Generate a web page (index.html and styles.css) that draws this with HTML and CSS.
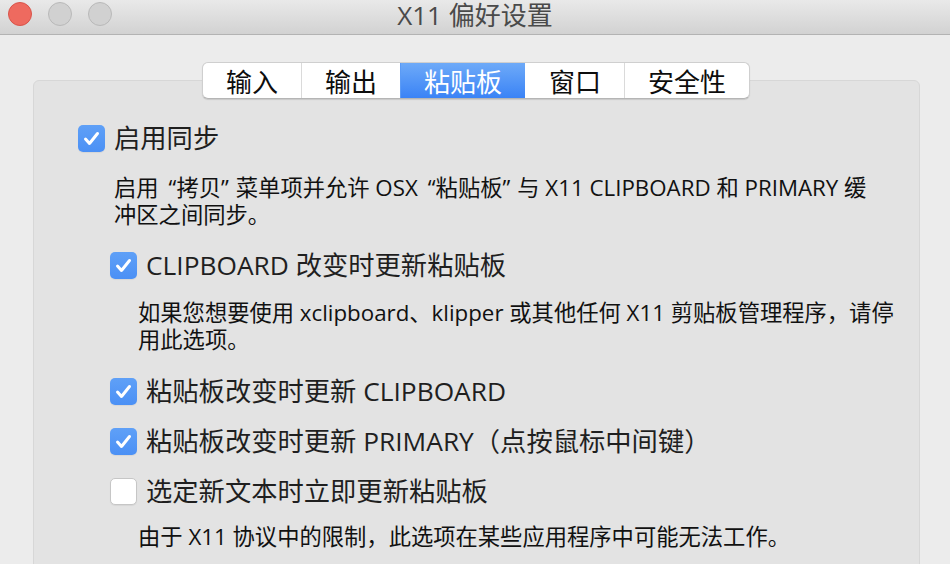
FILE: index.html
```html
<!DOCTYPE html>
<html lang="zh-CN">
<head>
<meta charset="utf-8">
<title>X11 偏好设置</title>
<link rel="stylesheet" href="styles.css">
</head>
<body>
<div class="window">
  <header class="titlebar">
    <div class="lights">
      <span class="light close"></span>
      <span class="light"></span>
      <span class="light"></span>
    </div>
    <div class="title">X11 偏好设置</div>
    <div class="spacer"></div>
  </header>

  <main class="content">
    <nav class="tabs">
      <span class="tab">输入</span>
      <span class="tab">输出</span>
      <span class="tab active">粘贴板</span>
      <span class="tab">窗口</span>
      <span class="tab">安全性</span>
    </nav>

    <section class="panel">
      <div class="option">
        <span class="box checked"><svg viewBox="0 0 27 27"><path d="M7.5 14 L11.5 18.5 L19.5 8.5"/></svg></span>
        <span class="label">启用同步</span>
      </div>
      <p class="desc d1">启用<span class="ql">“</span>拷贝<span class="qr">”</span>菜单项并允许 OSX<span class="ql">“</span>粘贴板<span class="qr">”</span>与 X11 CLIPBOARD 和 PRIMARY 缓<br>冲区之间同步。</p>

      <div class="nested">
        <div class="option">
          <span class="box checked"><svg viewBox="0 0 27 27"><path d="M7.5 14 L11.5 18.5 L19.5 8.5"/></svg></span>
          <span class="label">CLIPBOARD 改变时更新粘贴板</span>
        </div>
        <p class="desc d2">如果您想要使用 xclipboard、klipper 或其他任何 X11 剪贴板管理程序，请停<br>用此选项。</p>

        <div class="option o3">
          <span class="box checked"><svg viewBox="0 0 27 27"><path d="M7.5 14 L11.5 18.5 L19.5 8.5"/></svg></span>
          <span class="label">粘贴板改变时更新 CLIPBOARD</span>
        </div>
        <div class="option o4">
          <span class="box checked"><svg viewBox="0 0 27 27"><path d="M7.5 14 L11.5 18.5 L19.5 8.5"/></svg></span>
          <span class="label">粘贴板改变时更新 PRIMARY（点按鼠标中间键）</span>
        </div>
        <div class="option o4">
          <span class="box"></span>
          <span class="label">选定新文本时立即更新粘贴板</span>
        </div>
        <p class="desc d3">由于 X11 协议中的限制，此选项在某些应用程序中可能无法工作。</p>
      </div>
    </section>
  </main>
</div>
</body>
</html>
```

FILE: styles.css
```css
* { box-sizing: border-box; }

html, body {
  margin: 0;
  padding: 0;
  height: 100%;
  overflow: hidden;
}

body {
  background: #ececec;
  font-family: "Open Sans", "Noto Sans CJK SC", sans-serif;
  color: #1e1e1e;
}

.window {
  width: 950px;
  height: 564px;
  overflow: hidden;
}

.titlebar {
  height: 35px;
  display: grid;
  grid-template-columns: 1fr auto 1fr;
  align-items: start;
  padding: 0 8px;
  background: linear-gradient(#e9e9e9, #d2d2d2);
  border-bottom: 1px solid #b3b3b3;
}

.lights {
  display: flex;
  gap: 16px;
  margin-top: 2px;
}

.light {
  width: 24px;
  height: 24px;
  border-radius: 50%;
  background: #d1d1d1;
  border: 1px solid #b9b9b9;
}

.light.close {
  background: #ee6a5f;
  border-color: #d9544a;
}

.title {
  font-size: 26px;
  line-height: 30px;
  color: #4a4a4a;
}

.content {
  padding-top: 27px;
  padding-left: 2px;
}

.tabs {
  position: relative;
  z-index: 1;
  display: flex;
  width: max-content;
  margin: 0 auto -19px auto;
  height: 37px;
  background: #fff;
  border-radius: 6px;
  border: 1px solid #cfcfcf;
  border-bottom-color: #b5b5b5;
  box-shadow: 0 1px 1px rgba(0,0,0,0.12);
  overflow: hidden;
}

.tab {
  display: flex;
  align-items: center;
  justify-content: center;
  padding: 0 23px;
  font-size: 26px;
  color: #0d0d0d;
  border-left: 1px solid #dadada;
}

.tab:first-child { border-left: none; }

.tab.active {
  background: linear-gradient(#6eaaf8, #3a83f6);
  color: #fff;
  border-left-color: #5b9bf6;
}

.tab.active + .tab { border-left-color: transparent; }

.panel {
  margin-left: 31px;
  width: 887px;
  height: 520px;
  background: #e3e3e3;
  border: 1px solid #d7d7d7;
  border-radius: 6px;
  padding: 39px 0 0 44px;
}

.option {
  display: flex;
  align-items: center;
  gap: 9px;
  height: 36px;
}

.box {
  flex: none;
  width: 27px;
  height: 27px;
  border-radius: 5px;
  background: #fff;
  border: 1px solid #c6c6c6;
  box-shadow: 0 1px 1px rgba(0,0,0,0.06);
}

.box.checked {
  background: linear-gradient(#5fa0f7, #4b90f5);
  border: none;
}

.box svg {
  display: block;
  width: 27px;
  height: 27px;
}

.box svg path {
  fill: none;
  stroke: #fff;
  stroke-width: 3;
  stroke-linecap: round;
  stroke-linejoin: round;
}

.label {
  font-size: 26.3px;
  line-height: 36px;
  color: #1f1f1f;
  white-space: nowrap;
}

.desc {
  margin: 0;
  font-size: 22.3px;
  line-height: 27px;
  color: #111;
  white-space: nowrap;
}

.ql { padding-left: 10px; }
.qr { padding-right: 7px; }

.d1 { margin: 18px 0 19px 36px; }

.nested { margin-left: 32px; }

.d2 { margin: 16px 0 20px 28px; }

.o4 { margin-top: 14px; }

.d3 { margin: 14px 0 0 28px; }
```
